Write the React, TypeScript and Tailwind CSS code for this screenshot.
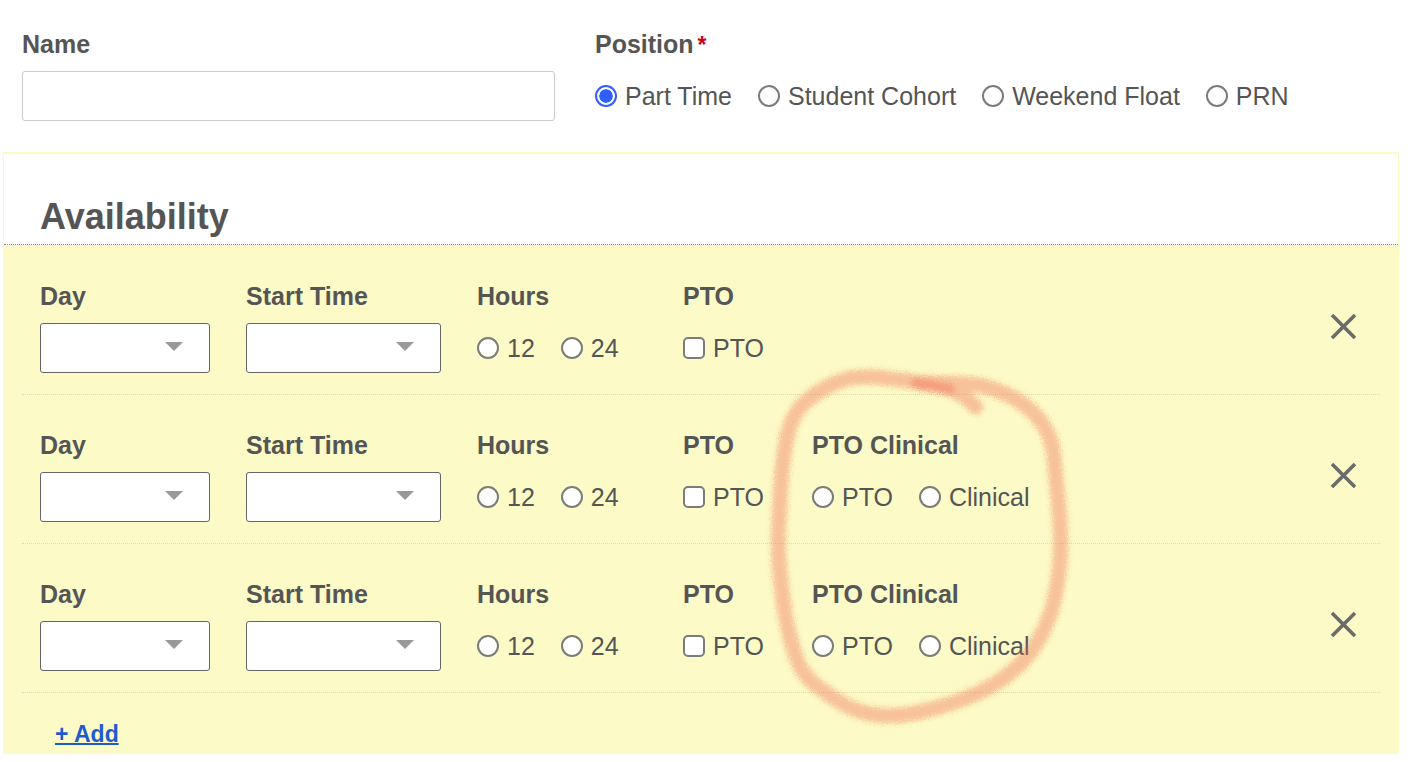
import { useState } from "react";

type Point = [number, number];

const POSITIONS = ["Part Time", "Student Cohort", "Weekend Float", "PRN"];
const DAYS = ["Monday", "Tuesday", "Wednesday", "Thursday", "Friday", "Saturday", "Sunday"];
const TIMES = ["7:00 AM", "11:00 AM", "3:00 PM", "7:00 PM"];

// Hand-drawn highlight, in the coordinates of the row list.
const MARKER: Point[] = [
  [908, 137], [930, 138], [956, 138], [982, 141], [1012, 153], [1036, 173], [1049, 198],
  [1052, 235], [1056, 272], [1057, 305], [1054, 338], [1046, 374], [1025, 412],
  [993, 439], [959, 455], [919, 467], [886, 472], [853, 467], [824, 450], [798, 429],
  [786, 395], [778, 352], [774, 305], [775, 272], [778, 222], [783, 188], [793, 164],
  [813, 147], [839, 134], [863, 131], [889, 134], [919, 138], [946, 143], [961, 152], [972, 162],
];
// Where the stroke crosses itself the colour builds up.
const MARKER_OVERLAP: Point[] = [[912, 138], [926, 140], [946, 144]];

function smooth(points: Point[]) {
  let d = `M${points[0][0]} ${points[0][1]}`;
  for (let i = 1; i < points.length - 1; i++) {
    const [x, y] = points[i];
    const [nx, ny] = points[i + 1];
    d += ` Q${x} ${y} ${(x + nx) / 2} ${(y + ny) / 2}`;
  }
  const [lx, ly] = points[points.length - 1];
  return `${d} L${lx} ${ly}`;
}

function Choice({
  type = "radio",
  name,
  label,
  defaultChecked,
}: {
  type?: "radio" | "checkbox";
  name: string;
  label: string;
  defaultChecked?: boolean;
}) {
  return (
    <label className="flex items-center gap-2 whitespace-nowrap">
      <input
        type={type}
        name={name}
        value={label}
        defaultChecked={defaultChecked}
        className={`size-[22px] shrink-0 appearance-none border-2 border-[#7c7c7c] bg-white bg-clip-content p-0.5 shadow-[inset_0_0_0_2px_white] checked:border-[#2f5fff] checked:bg-[#2f5fff] ${
          type === "radio" ? "rounded-full" : "rounded-[5px]"
        }`}
      />
      {label}
    </label>
  );
}

function Choices({ legend, width, children }: { legend: string; width: string; children: React.ReactNode }) {
  return (
    <fieldset className={width}>
      <legend className="font-bold leading-7">{legend}</legend>
      <div className="mt-[13px] flex h-[50px] items-center gap-[26px]">{children}</div>
    </fieldset>
  );
}

function SelectField({ id, label, width, options }: { id: string; label: string; width: string; options: string[] }) {
  return (
    <div className={width}>
      <label htmlFor={id} className="block font-bold leading-7">{label}</label>
      <div className="relative mt-[13px]">
        <select
          id={id}
          defaultValue=""
          className="block h-[50px] w-full appearance-none rounded-[3px] border border-[#666] bg-white pl-3 pr-12"
        >
          <option value="" />
          {options.map((o) => <option key={o}>{o}</option>)}
        </select>
        <svg className="pointer-events-none absolute right-[27px] top-[19px] h-[9px] w-[18px]" viewBox="0 0 18 9">
          <path d="M0 0H18L9 9Z" fill="#999" />
        </svg>
      </div>
    </div>
  );
}

function AvailabilityRow({ id, clinical, onRemove }: { id: number; clinical: boolean; onRemove: () => void }) {
  return (
    <li className="flex gap-9 border-b border-dotted border-[#d8d8d4] pb-[21px] pl-[18px] pr-6 pt-9">
      <SelectField id={`day-${id}`} label="Day" width="w-[170px]" options={DAYS} />
      <SelectField id={`start-${id}`} label="Start Time" width="w-[195px]" options={TIMES} />
      <Choices legend="Hours" width="w-[170px]">
        <Choice name={`hours-${id}`} label="12" />
        <Choice name={`hours-${id}`} label="24" />
      </Choices>
      <Choices legend="PTO" width="w-[93px]">
        <Choice type="checkbox" name={`pto-${id}`} label="PTO" />
      </Choices>
      {clinical && (
        <Choices legend="PTO Clinical" width="w-[220px]">
          <Choice name={`clinical-${id}`} label="PTO" />
          <Choice name={`clinical-${id}`} label="Clinical" />
        </Choices>
      )}
      <button type="button" onClick={onRemove} aria-label="Remove row" className="ml-auto mt-[31px] size-[26px] shrink-0">
        <svg viewBox="0 0 26 26" className="size-full">
          <path d="M2 2L25 25M25 2L2 25" stroke="#6b6b6b" strokeWidth="3.6" />
        </svg>
      </button>
    </li>
  );
}

function MarkerCircle() {
  return (
    <svg className="pointer-events-none absolute left-0 top-0 h-[509px] w-[1394px] overflow-visible" aria-hidden="true">
      <defs>
        <filter id="crayon" filterUnits="userSpaceOnUse" x="740" y="100" width="360" height="400">
          <feGaussianBlur stdDeviation="2.8" result="soft" />
          <feTurbulence type="fractalNoise" baseFrequency="0.7" numOctaves="2" seed="4" />
          <feDisplacementMap in="soft" scale="7" xChannelSelector="R" yChannelSelector="G" />
        </filter>
      </defs>
      <g fill="none" stroke="#f0664f" strokeLinecap="round" strokeLinejoin="round">
        <path d={smooth(MARKER)} strokeWidth="15" strokeOpacity="0.38" filter="url(#crayon)" />
        <path d={smooth(MARKER_OVERLAP)} strokeWidth="10" strokeOpacity="0.4" filter="url(#crayon)" />
      </g>
    </svg>
  );
}

export default function App() {
  const [rows, setRows] = useState([
    { id: 1, clinical: false },
    { id: 2, clinical: true },
    { id: 3, clinical: true },
  ]);

  return (
    <form className="bg-white pb-2 pl-[3px] pr-[11px] pt-[30px] font-['Liberation_Sans',Arial,sans-serif] text-[25px] leading-7 text-[#555]">
      <div className="flex gap-10 pl-[19px]">
        <div className="w-[533px]">
          <label htmlFor="name" className="block font-bold">Name</label>
          <input id="name" type="text" className="mt-[13px] block h-[50px] w-full rounded-[3px] border border-[#ccc] px-3" />
        </div>
        <fieldset className="flex-1">
          <legend className="font-bold">
            Position<span className="ml-1 text-[23px] leading-none text-[#d0021b]">*</span>
          </legend>
          <div className="mt-[13px] flex h-[50px] items-center gap-[26px]">
            {POSITIONS.map((p, i) => <Choice key={p} name="position" label={p} defaultChecked={i === 0} />)}
          </div>
        </fieldset>
      </div>

      <section className="mt-[31px] border-x border-t-2 border-[#fcfac6] bg-[#fcfac6]">
        <h2 className="border-b border-dotted border-[#888] bg-white pb-[5px] pl-9 pt-[41px] text-4xl font-bold leading-11">
          Availability
        </h2>
        <div className="relative">
          <ul className="mx-[18px] pt-px">
            {rows.map((r) => (
              <AvailabilityRow
                key={r.id}
                id={r.id}
                clinical={r.clinical}
                onRemove={() => setRows(rows.filter((x) => x.id !== r.id))}
              />
            ))}
          </ul>
          <MarkerCircle />
          <div className="pb-1.5 pl-[51px] pt-[27px]">
            <button
              type="button"
              onClick={() => setRows([...rows, { id: Date.now(), clinical: true }])}
              className="block text-[23px] font-bold leading-7 text-[#1f5bd0] underline decoration-2"
            >
              + Add
            </button>
          </div>
        </div>
      </section>
    </form>
  );
}
